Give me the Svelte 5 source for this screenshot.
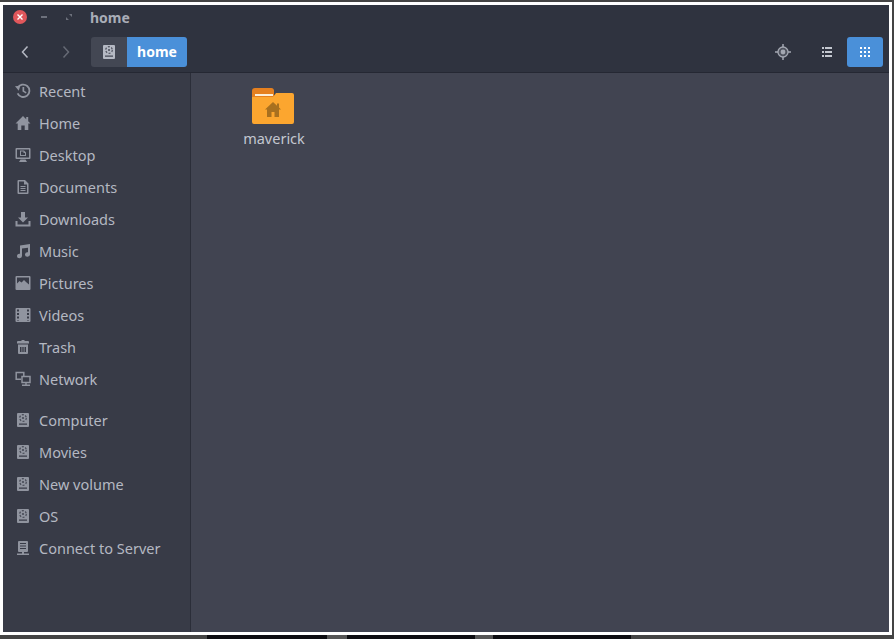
<script>
    const places = [
        { name: 'Recent', icon: 'recent' },
        { name: 'Home', icon: 'home' },
        { name: 'Desktop', icon: 'desktop' },
        { name: 'Documents', icon: 'documents' },
        { name: 'Downloads', icon: 'downloads' },
        { name: 'Music', icon: 'music' },
        { name: 'Pictures', icon: 'pictures' },
        { name: 'Videos', icon: 'videos' },
        { name: 'Trash', icon: 'trash' },
        { name: 'Network', icon: 'network' }
    ];
    const devices = [
        { name: 'Computer', icon: 'drive' },
        { name: 'Movies', icon: 'drive' },
        { name: 'New volume', icon: 'drive' },
        { name: 'OS', icon: 'drive' },
        { name: 'Connect to Server', icon: 'server' }
    ];
</script>

{#snippet driveIcon()}
    <path fill-rule="evenodd" d="M3 1h10a1 1 0 0 1 1 1v12a1 1 0 0 1-1 1H3a1 1 0 0 1-1-1V2a1 1 0 0 1 1-1zM4 11.500v1.200h8v-1.200z"/>
    <circle cx="8" cy="6" r="3.300" fill="none" stroke="#343743" stroke-width="1.200" stroke-dasharray="2 1.500" opacity=".8"/>
    <circle cx="8" cy="6" r="1.100" fill="#343743" opacity=".8"/>
{/snippet}

{#snippet icon(name)}
    <svg class="icon" viewBox="0 0 16 16" width="16" height="16" fill="currentColor">
        {#if name === 'recent'}
            <path d="M2.600 10.300A6.200 6.200 0 1 0 2.700 5" fill="none" stroke="currentColor" stroke-width="1.800"/>
            <path d="M0 3.200 5.200 2.800 3.800 7.800z"/>
            <path d="M7.500 4h1.700v3.700l2.400 1.500-.8 1.300-3.300-2z"/>
        {:else if name === 'home'}
            <path d="M8 1 0.500 8.500h2.200V15h3.600v-4.500h3.400V15h3.600V8.500h2.200l-2.300-2.300V2h-2v2.200z"/>
        {:else if name === 'desktop'}
            <path fill-rule="evenodd" d="M1.500 1h13a1 1 0 0 1 1 1v9a1 1 0 0 1-1 1H1.500a1 1 0 0 1-1-1V2a1 1 0 0 1 1-1zM2 2.500v8h12v-8z"/>
            <path fill-rule="evenodd" d="M5 3.500h4l2 2v3.500H5zM6 4.500v3.500h4V6H8.500V4.500z"/>
            <path d="M5.500 12.500h5l1.500 2.500H4z"/>
        {:else if name === 'documents'}
            <path fill-rule="evenodd" d="M3.500 1H10l3.500 3.500V14a1 1 0 0 1-1 1h-9a1 1 0 0 1-1-1V2a1 1 0 0 1 1-1zM4 2.500v11h8V5.500H9V2.500z"/>
            <path d="M5.500 7h5v1h-5zM5.500 9h5v1h-5zM5.500 11h5v1h-5z"/>
        {:else if name === 'downloads'}
            <path d="M6 1h4v5.500h3L8 11.500 3 6.500h3z"/>
            <path d="M0.500 10h2v3.500h11V10h2v5.500H0.500z"/>
        {:else if name === 'music'}
            <path d="M5 2.500 15 1v10.500a2.500 2.200 0 1 1-2-2.200V4.700L7 5.600v7.400a2.500 2.200 0 1 1-2-2.200z"/>
        {:else if name === 'pictures'}
            <path fill-rule="evenodd" d="M1.500 1h13a1 1 0 0 1 1 1v12a1 1 0 0 1-1 1h-13a1 1 0 0 1-1-1V2a1 1 0 0 1 1-1zM2 2.500v6l2.500-2.500 2 1.500 2.500-2.500 2 2 3 2.500V2.500z"/>
        {:else if name === 'videos'}
            <path fill-rule="evenodd" d="M1.500 1h13a1 1 0 0 1 1 1v12a1 1 0 0 1-1 1h-13a1 1 0 0 1-1-1V2a1 1 0 0 1 1-1zM2 2.500v2h2v-2zM2 6v2h2V6zM2 9.500v2h2v-2zM2 13v.500h2V13zM12 2.500v2h2v-2zM12 6v2h2V6zM12 9.500v2h2v-2zM12 13v.500h2V13z"/>
        {:else if name === 'trash'}
            <path d="M6.500 1h3v1H13a1 1 0 0 1 1 1v1.500H2V3a1 1 0 0 1 1-1h3.500z"/>
            <path fill-rule="evenodd" d="M3 5.500h10V14a1 1 0 0 1-1 1H4a1 1 0 0 1-1-1zM5 8v5h1.500V8zM7.300 8v5h1.400V8zM9.500 8v5H11V8z"/>
        {:else if name === 'network'}
            <path d="M6 8.300H1.200V1.500h7.600V5" fill="none" stroke="currentColor" stroke-width="1.500"/>
            <rect x="7" y="5.500" width="8" height="6" fill="none" stroke="currentColor" stroke-width="1.500"/>
            <path d="M10.300 11.500h1.400v2H15V15H7v-1.500h3.300z"/>
        {:else if name === 'drive'}
            {@render driveIcon()}
        {:else if name === 'server'}
            <path fill-rule="evenodd" d="M4 1h8a1 1 0 0 1 1 1v9a1 1 0 0 1-1 1H9v1.500h5V15H2v-1.500h5V12H4a1 1 0 0 1-1-1V2a1 1 0 0 1 1-1zM5 3v1h6V3zM5 5.500v1h6v-1zM5 8v1h6V8z"/>
        {/if}
    </svg>
{/snippet}

<div class="screen">
    <div class="frame">
        <div class="window">
            <header>
                <div class="titlebar">
                    <span class="close">
                        <svg viewBox="0 0 14 14" width="14" height="14"><path d="M4.500 4.500l5 5m0-5l-5 5" stroke="#fff" stroke-width="1.400" fill="none"/></svg>
                    </span>
                    <span class="minimize"></span>
                    <svg class="maximize" viewBox="0 0 8 8" width="8" height="8"><path d="M4 1h3v3zM1 4l3 3H1z" fill="#6d717c"/></svg>
                    <span class="title">home</span>
                </div>
                <div class="toolbar">
                    <button class="nav back" aria-label="Back">
                        <svg viewBox="0 0 10 16" width="10" height="16"><path d="M7.500 2.500 2.500 8l5 5.500" fill="none" stroke="#b5b9c3" stroke-width="1.500"/></svg>
                    </button>
                    <button class="nav forward" aria-label="Forward">
                        <svg viewBox="0 0 10 16" width="10" height="16"><path d="M2.500 2.500 7.500 8l-5 5.500" fill="none" stroke="#666a75" stroke-width="1.500"/></svg>
                    </button>
                    <div class="pathbar">
                        <span class="crumb-drive">
                            <svg viewBox="0 0 16 16" width="16" height="16" fill="#b5b9c3">{@render driveIcon()}</svg>
                        </span>
                        <span class="crumb-home">home</span>
                    </div>
                    <div class="spacer"></div>
                    <button class="tool locate" aria-label="Location">
                        <svg viewBox="0 0 16 16" width="16" height="16"><path d="M8 1.500 14.500 8 8 14.500 1.500 8z" fill="#6f737e" opacity=".5"/><circle cx="8" cy="8" r="5" fill="none" stroke="#a3a7b1" stroke-width="1.300"/><circle cx="8" cy="8" r="2.400" fill="#a3a7b1"/><path d="M8 0v3M8 13v3M0 8h3M13 8h3" stroke="#a3a7b1" stroke-width="1.500"/></svg>
                    </button>
                    <button class="tool list" aria-label="List view">
                        <svg viewBox="0 0 12 12" width="12" height="12" fill="#c4c8d0"><path d="M1 1h2v2H1zM4 1h7v2H4zM1 5h2v2H1zM4 5h7v2H4zM1 9h2v2H1zM4 9h7v2H4z"/></svg>
                    </button>
                    <button class="tool grid" aria-label="Grid view">
                        <svg viewBox="0 0 10 10" width="10" height="10" fill="#fff"><path d="M0 0h2v2H0zM4 0h2v2H4zM8 0h2v2H8zM0 4h2v2H0zM4 4h2v2H4zM8 4h2v2H8zM0 8h2v2H0zM4 8h2v2H4zM8 8h2v2H8z"/></svg>
                    </button>
                </div>
            </header>
            <div class="body">
                <aside>
                    <ul class="places">
                        {#each places as p}
                            <li>{@render icon(p.icon)}<span>{p.name}</span></li>
                        {/each}
                    </ul>
                    <ul class="devices">
                        {#each devices as d}
                            <li>{@render icon(d.icon)}<span>{d.name}</span></li>
                        {/each}
                    </ul>
                </aside>
                <main>
                    <div class="file">
                        <svg class="folder" viewBox="0 0 44 36" width="44" height="36">
                            <path d="M0 3a3 3 0 0 1 3-3h16a3 3 0 0 1 3 2v8H0z" fill="#e5801f"/>
                            <rect x="3" y="6" width="18" height="2" fill="#fbeed8"/>
                            <path d="M0 10V9h21l3-4h16a2 2 0 0 1 2 2v27a2 2 0 0 1-2 2H2a2 2 0 0 1-2-2z" fill="#fca62f"/>
                            <path d="M21 14l-8 7.500h2V29h4.500v-5h3v5H27v-7.500h2l-2-1.900V15.500h-2v2.200z" fill="#a8701f"/>
                        </svg>
                        <span class="file-name">maverick</span>
                    </div>
                </main>
            </div>
        </div>
    </div>
    <div class="strip">
        <span class="strip-grey"></span>
        <span class="strip-dark one"></span>
        <span class="strip-mid"></span>
        <span class="strip-dark two"></span>
        <span class="strip-mid small"></span>
        <span class="strip-dark three"></span>
    </div>
</div>

<style>
    :global(body) { background: #444; font-family: "Noto Sans", "Open Sans", sans-serif; }
    .screen { width: 894px; height: 639px; display: flex; flex-direction: column; overflow: hidden; background: #444; padding-top: 2px; box-sizing: border-box; }
    .frame { height: 633px; width: 892px; box-sizing: border-box; border: 3px solid #fff; flex: none; }
    .window { height: 627px; width: 886px; display: flex; flex-direction: column; background: #414451; }

    header { height: 68px; flex: none; background: #2f333f; border-bottom: 1px solid #252833; box-sizing: border-box; }
    .titlebar { height: 24px; display: flex; align-items: center; padding-left: 10px; }
    .close { width: 14px; height: 14px; border-radius: 50%; background: #e0575b; display: flex; }
    .minimize { width: 6px; height: 2px; background: #6d717c; margin-left: 14px; }
    .maximize { margin-left: 18px; }
    .title { margin-left: 17px; font-size: 14px; font-weight: 700; color: #a9adb7; }
    .toolbar { height: 30px; display: flex; align-items: center; margin-top: 8px; }
    button { border: 0; background: none; padding: 0; display: flex; align-items: center; justify-content: center; }
    .nav { width: 10px; height: 30px; }
    .back { margin-left: 17px; }
    .forward { margin-left: 31px; }
    .pathbar { display: flex; height: 30px; margin-left: 20px; border-radius: 3px; overflow: hidden; }
    .crumb-drive { width: 36px; background: #434753; display: flex; align-items: center; justify-content: center; }
    .crumb-home { width: 60px; padding-bottom: 2px; box-sizing: border-box; background: #4a90d9; color: #fff; font-size: 14px; font-weight: 700; display: flex; align-items: center; justify-content: center; }
    .spacer { flex: 1; }
    .tool { height: 30px; }
    .locate { width: 16px; }
    .list { width: 12px; margin-left: 30px; }
    .grid { width: 36px; margin-left: 14px; margin-right: 6px; background: #4a90d9; border-radius: 3px; }

    .body { flex: 1; display: flex; min-height: 0; }
    aside { width: 188px; flex: none; background: #383b47; border-right: 1px solid #2b2e39; box-sizing: border-box; padding-top: 2px; }
    ul { list-style: none; margin: 0; padding: 0; }
    .devices { margin-top: 9px; }
    li { height: 32px; display: flex; align-items: center; padding-left: 12px; color: #b4b8c2; font-size: 14.500px; }
    .icon { color: #90949f; flex: none; margin-right: 8px; }
    main { flex: 1; min-width: 0; background: #414451; padding: 15px 0 0 39px; }
    .file { width: 88px; display: flex; flex-direction: column; align-items: center; }
    .folder { display: block; }
    .file-name { font-size: 14.500px; color: #c3c7d0; margin-top: 4px; }

    .strip { height: 4px; flex: none; display: flex; }
    .strip-grey { width: 207px; }
    .strip-dark { background: #0c0c10; }
    .strip-dark.one { width: 120px; }
    .strip-mid { width: 20px; background: #555; }
    .strip-mid.small { width: 18px; }
    .strip-dark.two { width: 128px; }
    .strip-dark.three { width: 138px; }
</style>
